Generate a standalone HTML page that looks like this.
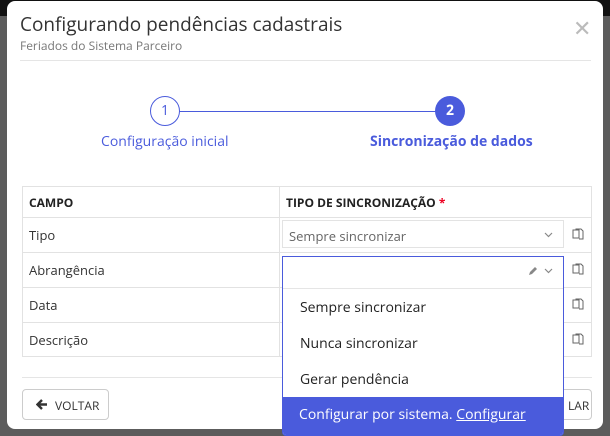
<!DOCTYPE html>
<html><head><meta charset="utf-8"><style>
*{box-sizing:border-box;margin:0;padding:0}
body{width:610px;height:434px;overflow:hidden;background:#5c5c5c;font-family:"Open Sans","Liberation Sans","DejaVu Sans",sans-serif;position:relative}
.top{position:absolute;left:0;top:0;width:610px;height:16px;background:#111}
.modal{position:absolute;left:7px;top:1px;width:596px;height:428px;background:#fff;border-radius:8px}
.abs{position:absolute}
.title{left:13px;top:10px;font-size:19px;color:#333}
.sub{left:13px;top:36px;font-size:12px;color:#777}
.close{left:566px;top:12px;font-size:22px;color:#bbb}
.hr{height:1px;background:#e5e5e5}
.circ{width:30px;height:30px;border-radius:50%;text-align:center;line-height:27px;font-size:14px}
.lbl{font-size:14px;color:#4a5bdc}
td{border:1px solid #e2e2e2;font-size:13px;color:#333;padding-left:6px}
.sel{border:1px solid #e3e3e3;height:28px;font-size:13px;color:#666;padding:6px 6px}
.item{left:17px;font-size:14px;color:#222}
</style></head><body>
<div class="top"></div>
<div class="modal">
<div class="abs title">Configurando pendências cadastrais</div>
<div class="abs sub">Feriados do Sistema Parceiro</div>
<div class="abs close">✕</div>
<div class="abs hr" style="left:13px;top:59px;width:571px"></div>
<div class="abs" style="left:172px;top:110px;width:272px;height:1px;background:#4a5bdc"></div>
<div class="abs circ" style="left:143px;top:95px;border:1.5px solid #4a5bdc;color:#4a5bdc;background:#fff">1</div>
<div class="abs circ" style="left:428px;top:95px;background:#4a5bdc;color:#fff;font-weight:bold;line-height:30px">2</div>
<div class="abs lbl" style="left:94px;top:131px">Configuração inicial</div>
<div class="abs lbl" style="left:363px;top:131px;font-weight:bold">Sincronização de dados</div>
<table class="abs" style="left:15px;top:185px;width:570px;border-collapse:collapse">
<tr style="height:31px"><td style="width:257px;font-weight:bold;font-size:12px;color:#222">CAMPO</td><td colspan="2" style="font-weight:bold;font-size:12px;color:#222">TIPO DE SINCRONIZAÇÃO <span style="color:#e02">*</span></td></tr>
<tr style="height:35px"><td>Tipo</td><td style="border-right:none"></td><td style="width:28px;border-left:none"></td></tr>
<tr style="height:35px"><td>Abrangência</td><td style="border-right:none"></td><td style="border-left:none"></td></tr>
<tr style="height:35px"><td>Data</td><td style="border-right:none"></td><td style="border-left:none"></td></tr>
<tr style="height:34px"><td>Descrição</td><td style="border-right:none"></td><td style="border-left:none"></td></tr>
</table>
<div class="abs sel" style="left:275px;top:219px;width:282px">Sempre sincronizar<svg class="abs" style="right:10px;top:11px" width="9" height="6" viewBox="0 0 9 6"><path d="M1 1l3.5 3.5L8 1" fill="none" stroke="#888" stroke-width="1.2"/></svg></div>
<svg class="abs" style="left:565px;top:227px" width="12" height="12" viewBox="0 0 12 12"><path d="M1 2h6v8H1z M4 2V1h5l2 2v8H7" fill="none" stroke="#666" stroke-width="1"/></svg>
<svg class="abs" style="left:565px;top:262px" width="12" height="12" viewBox="0 0 12 12"><path d="M1 2h6v8H1z M4 2V1h5l2 2v8H7" fill="none" stroke="#666" stroke-width="1"/></svg>
<svg class="abs" style="left:565px;top:297px" width="12" height="12" viewBox="0 0 12 12"><path d="M1 2h6v8H1z M4 2V1h5l2 2v8H7" fill="none" stroke="#666" stroke-width="1"/></svg>
<svg class="abs" style="left:565px;top:332px" width="12" height="12" viewBox="0 0 12 12"><path d="M1 2h6v8H1z M4 2V1h5l2 2v8H7" fill="none" stroke="#666" stroke-width="1"/></svg>
<div class="abs hr" style="left:15px;top:376px;width:570px"></div>
<div class="abs" style="left:15px;top:388px;width:87px;height:31px;border:1px solid #ccc;border-radius:4px;font-size:12px;color:#333;padding:7px 0 0 32px"><svg class="abs" style="left:13px;top:9px" width="12" height="11" viewBox="0 0 12 11"><path d="M6 1L1.5 5.5 6 10M2 5.5h9" fill="none" stroke="#333" stroke-width="2.4"/></svg>VOLTAR</div>
<div class="abs" style="left:520px;top:388px;width:65px;height:31px;border:1px solid #ccc;border-radius:4px;font-size:12px;color:#333;padding:7px 0 0 40px">LAR</div>
<div class="abs" style="left:275px;top:255px;width:282px;height:180px;background:#fff;border:1px solid #4a5bdc;border-radius:0 0 4px 4px;overflow:hidden">
<svg class="abs" style="left:245px;top:9px" width="10" height="10" viewBox="0 0 10 10"><path d="M1 9l1-3 5-5 2 2-5 5z" fill="#888"/></svg>
<svg class="abs" style="left:261px;top:11px" width="9" height="6" viewBox="0 0 9 6"><path d="M1 1l3.5 3.5L8 1" fill="none" stroke="#888" stroke-width="1.2"/></svg>
<div class="abs hr" style="left:0;top:31px;width:282px"></div>
<div class="abs item" style="top:41px">Sempre sincronizar</div>
<div class="abs item" style="top:77px">Nunca sincronizar</div>
<div class="abs item" style="top:113px">Gerar pendência</div>
<div class="abs" style="left:0;top:140px;width:282px;height:40px;background:#4a5bdc;color:#fff;font-size:14px;padding:8px 0 0 16px">Configurar por sistema. <u>Configurar</u></div>
</div>
</div>
</body></html>
